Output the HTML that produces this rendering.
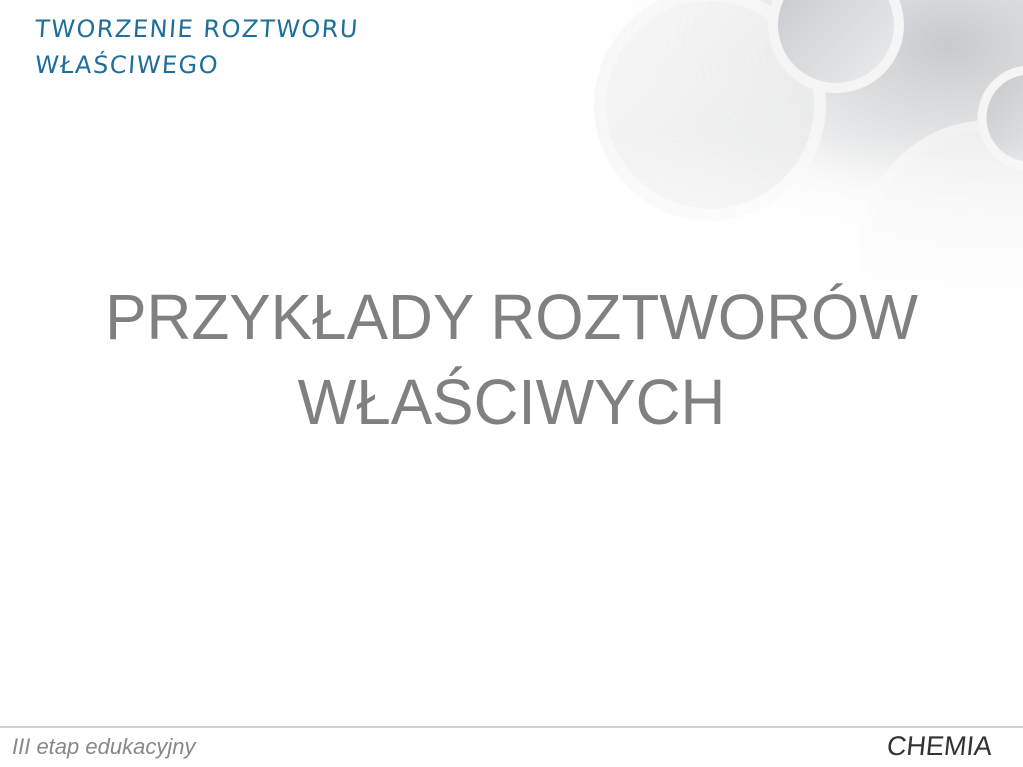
<!DOCTYPE html>
<html><head><meta charset="utf-8"><style>
body{margin:0;width:1023px;height:767px;overflow:hidden;background:#fff;position:relative;font-family:"Liberation Sans",sans-serif}
.bg{position:absolute;left:0;top:0}
.hd{position:absolute;left:35px;color:#1f6e9a;font-size:24px;letter-spacing:1.5px;font-family:"DejaVu Sans","Liberation Sans",sans-serif;transform:skewX(-4deg)}
.t{position:absolute;left:0;width:1023px;text-align:center;color:#808080;font-size:64px;line-height:1;white-space:nowrap;transform:scaleX(0.97)}
.line{position:absolute;left:0;top:726px;width:1023px;height:2px;background:#cfcfcf}
.ft{position:absolute;font-style:italic;color:#777}
</style></head><body>
<svg class="bg" width="1023" height="767">
<defs>
<linearGradient id="g1" x1="0" y1="0" x2="1" y2="1"><stop offset="0" stop-color="#c4c7ca"/><stop offset="1" stop-color="#eceeef"/></linearGradient>
<linearGradient id="g2" x1="0" y1="0" x2="1" y2="1"><stop offset="0" stop-color="#f6f6f6"/><stop offset="1" stop-color="#e8e9ea"/></linearGradient>
<radialGradient id="bgg" cx="0.85" cy="0.15" r="0.75"><stop offset="0" stop-color="#c8cbce"/><stop offset="0.5" stop-color="#e8e9ea"/><stop offset="1" stop-color="#fff" stop-opacity="0"/></radialGradient>
<linearGradient id="fm" x1="0" y1="0" x2="0" y2="1"><stop offset="0.45" stop-color="#fff"/><stop offset="1" stop-color="#000"/></linearGradient>
<linearGradient id="fl" x1="0" y1="0" x2="1" y2="0"><stop offset="0" stop-color="#000"/><stop offset="0.25" stop-color="#fff"/></linearGradient>
<mask id="m"><rect x="500" y="0" width="523" height="300" fill="url(#fm)"/></mask>
</defs>
<g mask="url(#m)">
<rect x="530" y="0" width="493" height="300" fill="url(#bgg)"/>
<circle cx="990" cy="250" r="125" fill="url(#g2)" stroke="#f6f6f6" stroke-width="10" opacity="0.8"/>
<circle cx="710" cy="105" r="110" fill="url(#g2)" stroke="#f7f7f7" stroke-width="12" opacity="0.9"/>
<circle cx="836" cy="25" r="63" fill="url(#g1)" stroke="#f5f5f5" stroke-width="10"/>
<circle cx="1030" cy="118" r="48" fill="url(#g1)" stroke="#f5f5f5" stroke-width="9"/>
</g>
</svg>
<div class="hd" style="top:15px">TWORZENIE ROZTWORU</div>
<div class="hd" style="top:51px">WŁAŚCIWEGO</div>
<div class="t" style="top:285px">PRZYKŁADY ROZTWORÓW</div>
<div class="t" style="top:370px">WŁAŚCIWYCH</div>
<div class="line"></div>
<div class="ft" style="left:12px;top:734px;font-size:22px;color:#888">III etap edukacyjny</div>
<div class="ft" style="left:887px;top:731px;font-size:27px;color:#333;font-style:normal;transform:skewX(-6deg)">CHEMIA</div>
</body></html>
